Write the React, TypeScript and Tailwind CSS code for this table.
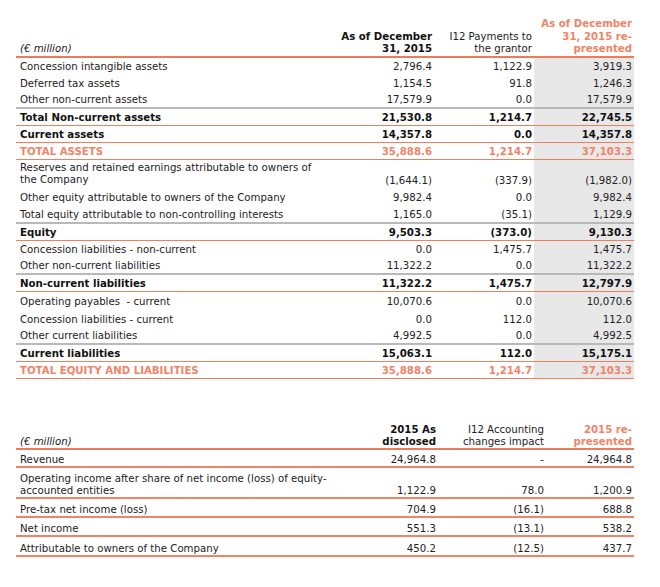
import React from "react";

type Row = {
  label: string;
  v: [string, string, string];
  kind?: "bold" | "total";
  line?: "gray" | "orange";
  h: string;
  tall?: boolean;
};

const balance: Row[] = [
  { label: "Concession intangible assets", v: ["2,796.4", "1,122.9", "3,919.3"], h: "h-[17px]" },
  { label: "Deferred tax assets", v: ["1,154.5", "91.8", "1,246.3"], h: "h-[17px]" },
  { label: "Other non-current assets", v: ["17,579.9", "0.0", "17,579.9"], line: "gray", h: "h-[17px]" },
  { label: "Total Non-current assets", v: ["21,530.8", "1,214.7", "22,745.5"], kind: "bold", line: "orange", h: "h-[17px]" },
  { label: "Current assets", v: ["14,357.8", "0.0", "14,357.8"], kind: "bold", line: "orange", h: "h-[17px]" },
  { label: "TOTAL ASSETS", v: ["35,888.6", "1,214.7", "37,103.3"], kind: "total", line: "orange", h: "h-[17px]" },
  { label: "Reserves and retained earnings attributable to owners of the Company", v: ["(1,644.1)", "(337.9)", "(1,982.0)"], h: "h-[28px]", tall: true },
  { label: "Other equity attributable to owners of the Company", v: ["9,982.4", "0.0", "9,982.4"], h: "h-[18px]" },
  { label: "Total equity attributable to non-controlling interests", v: ["1,165.0", "(35.1)", "1,129.9"], line: "gray", h: "h-[18px]" },
  { label: "Equity", v: ["9,503.3", "(373.0)", "9,130.3"], kind: "bold", line: "orange", h: "h-[17px]" },
  { label: "Concession liabilities - non-current", v: ["0.0", "1,475.7", "1,475.7"], h: "h-[17px]" },
  { label: "Other non-current liabilities", v: ["11,322.2", "0.0", "11,322.2"], line: "gray", h: "h-[17px]" },
  { label: "Non-current liabilities", v: ["11,322.2", "1,475.7", "12,797.9"], kind: "bold", line: "orange", h: "h-[17px]" },
  { label: "Operating payables\u00a0 - current", v: ["10,070.6", "0.0", "10,070.6"], h: "h-[18px]" },
  { label: "Concession liabilities - current", v: ["0.0", "112.0", "112.0"], h: "h-[18px]" },
  { label: "Other current liabilities", v: ["4,992.5", "0.0", "4,992.5"], line: "gray", h: "h-[17px]" },
  { label: "Current liabilities", v: ["15,063.1", "112.0", "15,175.1"], kind: "bold", line: "orange", h: "h-[17px]" },
  { label: "TOTAL EQUITY AND LIABILITIES", v: ["35,888.6", "1,214.7", "37,103.3"], kind: "total", line: "orange", h: "h-[17px]" },
];

const income: { label: string; v: [string, string, string]; h: string }[] = [
  { label: "Revenue", v: ["24,964.8", "-", "24,964.8"], h: "h-[18px]" },
  { label: "Operating income after share of net income (loss) of equity-accounted entities", v: ["1,122.9", "78.0", "1,200.9"], h: "h-[31px]" },
  { label: "Pre-tax net income (loss)", v: ["704.9", "(16.1)", "688.8"], h: "h-[19px]" },
  { label: "Net income", v: ["551.3", "(13.1)", "538.2"], h: "h-[19px]" },
  { label: "Attributable to owners of the Company", v: ["450.2", "(12.5)", "437.7"], h: "h-[20px]" },
];

function BalanceRow({ r }: { r: Row }) {
  const border =
    r.line === "gray"
      ? "border-b-2 border-[#b9b9b9]"
      : r.line === "orange"
      ? "border-b border-[#ee8060]"
      : "";
  const text =
    r.kind === "total"
      ? "font-bold text-[#f08467]"
      : r.kind === "bold"
      ? "font-bold text-[#111]"
      : "text-[#222]";
  const num = r.tall
    ? "flex items-end justify-end pr-0.5 pb-[1px]"
    : "flex items-center justify-end pr-0.5 pt-[2px]";
  return (
    <div className={`grid grid-cols-[318px_100px_100px_100px] leading-[12px] ${r.h} ${border} ${text}`}>
      <div className={`flex items-center pl-1 pr-3 ${r.tall ? "" : "pt-[2px]"}`}>{r.label}</div>
      <div className={num}>{r.v[0]}</div>
      <div className={num}>{r.v[1]}</div>
      <div className={`${num} bg-[#e8e8e8]`}>{r.v[2]}</div>
    </div>
  );
}

export default function App() {
  return (
    <div
      className="w-[660px] h-[587px] bg-white text-[10.2px] text-[#222] pl-4 pt-[18px]"
      style={{ fontFamily: '"DejaVu Sans", Verdana, sans-serif' }}
    >
      <div className="w-[618px]">
        <div className="grid grid-cols-[318px_100px_100px_100px] border-b-2 border-[#ee7c5b] leading-[12.5px]">
          <div className="flex items-end pl-1 italic">(€ million)</div>
          <div className="flex items-end justify-end pr-0.5 text-right font-bold text-[#111]">
            As of December
            <br />
            31, 2015
          </div>
          <div className="flex items-end justify-end pr-0.5 text-right">
            I12 Payments to
            <br />
            the grantor
          </div>
          <div className="flex items-end justify-end pr-0.5 text-right font-bold text-[#f08467]">
            As of December
            <br />
            31, 2015 re-
            <br />
            presented
          </div>
        </div>
        {balance.map((r) => (
          <BalanceRow key={r.label} r={r} />
        ))}
      </div>

      <div className="w-[618px] mt-[45px]">
        <div className="grid grid-cols-[318px_104px_108px_88px] border-b-2 border-[#ee7c5b] leading-[12px]">
          <div className="flex items-end pl-1 italic">(€ million)</div>
          <div className="flex items-end justify-end pr-0.5 text-right font-bold text-[#111]">
            2015 As
            <br />
            disclosed
          </div>
          <div className="flex items-end justify-end pr-0.5 text-right">
            I12 Accounting
            <br />
            changes impact
          </div>
          <div className="flex items-end justify-end pr-0.5 text-right font-bold text-[#f08467]">
            2015 re-
            <br />
            presented
          </div>
        </div>
        {income.map((r) => (
          <div
            key={r.label}
            className={`grid grid-cols-[318px_104px_108px_88px] leading-[12px] border-b-2 border-[#ef8466] ${r.h}`}
          >
            <div className="flex items-end pl-1">{r.label}</div>
            <div className="flex items-end justify-end pr-0.5">{r.v[0]}</div>
            <div className="flex items-end justify-end pr-0.5">{r.v[1]}</div>
            <div className="flex items-end justify-end pr-0.5">{r.v[2]}</div>
          </div>
        ))}
      </div>
    </div>
  );
}
